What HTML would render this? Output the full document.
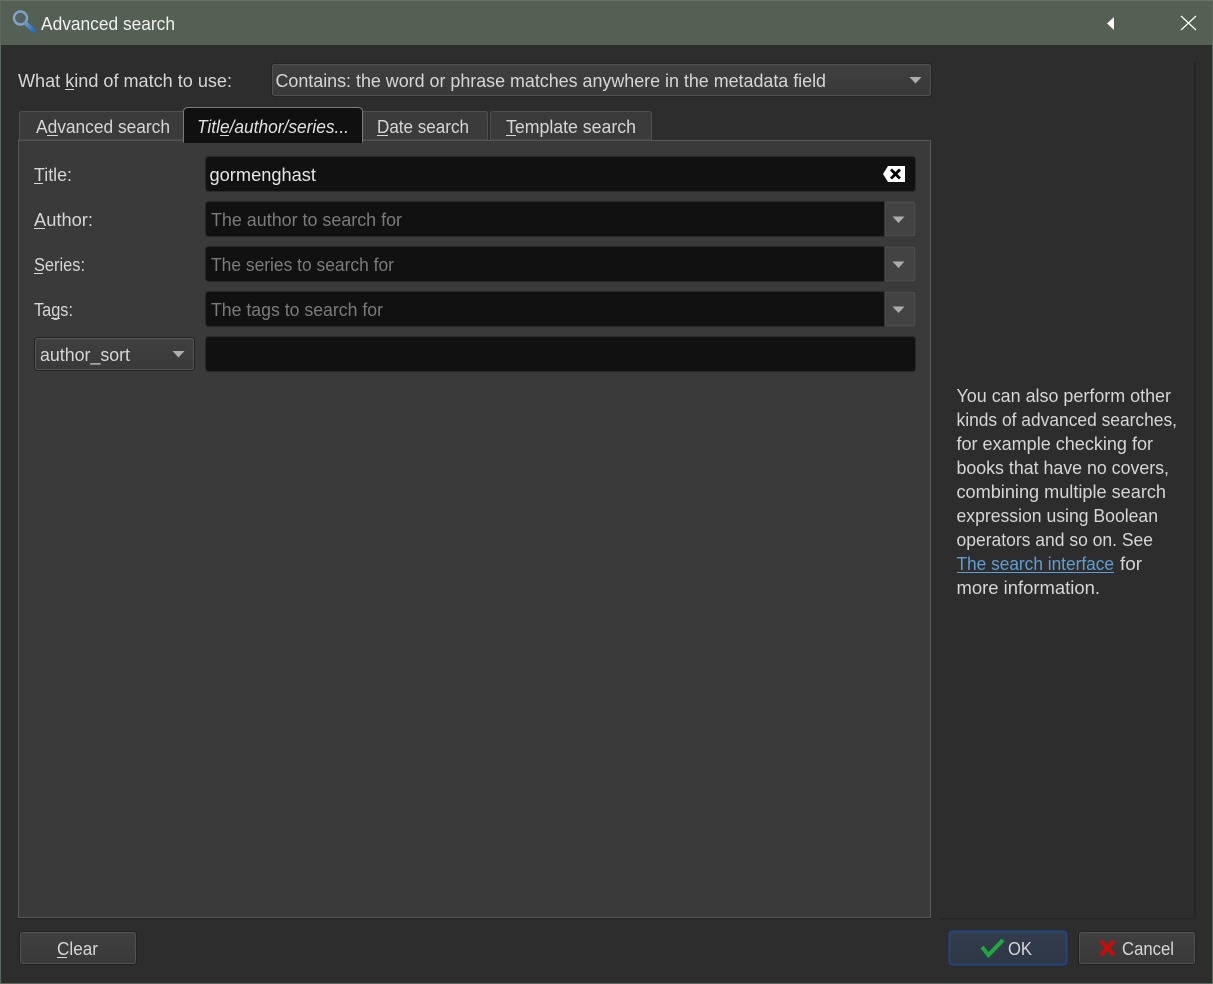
<!DOCTYPE html>
<html><head><meta charset="utf-8"><title>Advanced search</title>
<style>
html,body{margin:0;padding:0;width:1213px;height:984px;overflow:hidden;background:#2d2d2d}
svg{display:block}
text{font-family:"Liberation Sans",sans-serif;font-size:18px;fill:#d6d6d6}
.h{fill:#7b7b7b}
</style></head><body>
<svg width="1213" height="984" viewBox="0 0 1213 984" xmlns="http://www.w3.org/2000/svg">
<defs>
<linearGradient id="btn" x1="0" y1="0" x2="0" y2="1"><stop offset="0" stop-color="#404040"/><stop offset="1" stop-color="#393939"/></linearGradient>
<linearGradient id="ok" x1="0" y1="0" x2="0" y2="1"><stop offset="0" stop-color="#333d4d"/><stop offset="1" stop-color="#2e3746"/></linearGradient>
<linearGradient id="mag" x1="0" y1="0" x2="1" y2="1"><stop offset="0" stop-color="#6d95c0"/><stop offset="1" stop-color="#1f6fd0"/></linearGradient>
</defs>
<rect width="1213" height="984" fill="#2d2d2d"/>
<!-- window frame -->
<rect x="0" y="0" width="1213" height="45" fill="#536053"/>
<rect x="0" y="0" width="1213" height="1" fill="#66736a"/>
<rect x="0" y="0" width="1" height="984" fill="#5d6a5e"/>
<rect x="1212" y="0" width="1" height="984" fill="#5d6a5e"/>
<rect x="0" y="983" width="1213" height="1" fill="#5d6a5e"/>
<!-- title icon -->
<circle cx="20.500" cy="18" r="6.500" fill="#56697a" fill-opacity=".35" stroke="#7fa3c9" stroke-width="2.400"/>
<path d="M26 23.500L33.500 30.500" stroke="url(#mag)" stroke-width="4.200" stroke-linecap="round"/>
<text x="41" y="30" textLength="134" lengthAdjust="spacingAndGlyphs" style="fill:#f1f1f1">Advanced search</text>
<path d="M1114 17V30L1107 23.500Z" fill="#fff"/>
<path d="M1181 16L1196 30M1196 16L1181 30" stroke="#fff" stroke-width="1.200" fill="none"/>
<!-- match row -->
<text x="18" y="87" textLength="214" lengthAdjust="spacingAndGlyphs">What kind of match to use:</text>
<rect x="65" y="89" width="9" height="1" fill="#d6d6d6"/>
<rect x="271.500" y="63.500" width="660" height="33" rx="3" fill="url(#btn)" stroke="#242424"/>
<rect x="272.500" y="64.500" width="658" height="31" rx="2" fill="none" stroke="#505050"/>
<text x="275.500" y="87" textLength="550.500" lengthAdjust="spacingAndGlyphs">Contains: the word or phrase matches anywhere in the metadata field</text>
<path d="M909.500 77H921.500L915.500 83.500Z" fill="#adadad"/>
<!-- side frame -->
<rect x="1194" y="62" width="2" height="857" fill="#262626"/>
<rect x="940" y="918" width="256" height="1.500" fill="#262626"/>
<!-- panel -->
<rect x="18.500" y="140.500" width="912" height="777" fill="#3a3a3a" stroke="#585858"/>
<rect x="18" y="918" width="913" height="1" fill="#232323"/>
<!-- tabs -->
<path d="M19.500 140V114Q19.500 111.500 22 111.500H184V140Z" fill="#3b3b3b" stroke="#505050"/>
<text x="36" y="133" textLength="134" lengthAdjust="spacingAndGlyphs">Advanced search</text>
<rect x="47" y="135" width="11" height="1" fill="#d6d6d6"/>
<path d="M363 111.500H485Q487.500 111.500 487.500 114V140H363Z" fill="#3b3b3b" stroke="#505050"/>
<text x="377" y="133" textLength="92" lengthAdjust="spacingAndGlyphs">Date search</text>
<rect x="377" y="135" width="11" height="1" fill="#d6d6d6"/>
<path d="M490.500 140V114Q490.500 111.500 493 111.500H649Q651.500 111.500 651.500 114V140Z" fill="#3b3b3b" stroke="#505050"/>
<text x="506" y="133" textLength="130" lengthAdjust="spacingAndGlyphs">Template search</text>
<rect x="506" y="135" width="10" height="1" fill="#d6d6d6"/>
<path d="M183.500 142V112Q183.500 107.500 188 107.500H358Q362.500 107.500 362.500 112V142Z" fill="#101010" stroke="#7a7a7a"/>
<rect x="184" y="141" width="178" height="2" fill="#101010"/>
<text x="197" y="133" textLength="152" lengthAdjust="spacingAndGlyphs" font-style="italic" style="fill:#e2e2e2">Title/author/series...</text>
<rect x="220" y="135" width="9" height="1" fill="#d6d6d6"/>
<!-- labels -->
<text x="34" y="181" textLength="38" lengthAdjust="spacingAndGlyphs">Title:</text>
<rect x="34" y="183" width="9" height="1" fill="#d6d6d6"/>
<text x="34" y="226" textLength="59" lengthAdjust="spacingAndGlyphs">Author:</text>
<rect x="34" y="228" width="11" height="1" fill="#d6d6d6"/>
<text x="34" y="271" textLength="51" lengthAdjust="spacingAndGlyphs">Series:</text>
<rect x="34" y="273" width="9" height="1" fill="#d6d6d6"/>
<text x="34" y="316" textLength="39" lengthAdjust="spacingAndGlyphs">Tags:</text>
<rect x="51" y="318" width="9" height="1" fill="#d6d6d6"/>
<!-- title input -->
<rect x="205.500" y="156.500" width="710" height="35" rx="3" fill="#111" stroke="#2a2a2a"/>
<text x="209.500" y="181" textLength="106.500" lengthAdjust="spacingAndGlyphs" style="fill:#e6e6e6">gormenghast</text>
<path d="M883 174L888 166H905V182H888Z" fill="#fff"/>
<path d="M891 169.500L900 178.500M900 169.500L891 178.500" stroke="#000" stroke-width="2.800"/>
<!-- author -->
<rect x="205.500" y="201.500" width="710" height="35" rx="3" fill="#111" stroke="#2a2a2a"/>
<path d="M885 202H912.500Q915 202 915 204.500V233.500Q915 236 912.500 236H885Z" fill="#434343" stroke="#555"/>
<path d="M892.500 216.500H904.500L898.500 223Z" fill="#adadad"/>
<text class="h" x="211" y="226" textLength="191" lengthAdjust="spacingAndGlyphs">The author to search for</text>
<!-- series -->
<rect x="205.500" y="246.500" width="710" height="35" rx="3" fill="#111" stroke="#2a2a2a"/>
<path d="M885 247H912.500Q915 247 915 249.500V278.500Q915 281 912.500 281H885Z" fill="#434343" stroke="#555"/>
<path d="M892.500 261.500H904.500L898.500 268Z" fill="#adadad"/>
<text class="h" x="211" y="271" textLength="183" lengthAdjust="spacingAndGlyphs">The series to search for</text>
<!-- tags -->
<rect x="205.500" y="291.500" width="710" height="35" rx="3" fill="#111" stroke="#2a2a2a"/>
<path d="M885 292H912.500Q915 292 915 294.500V323.500Q915 326 912.500 326H885Z" fill="#434343" stroke="#555"/>
<path d="M892.500 306.500H904.500L898.500 313Z" fill="#adadad"/>
<text class="h" x="211" y="316" textLength="172" lengthAdjust="spacingAndGlyphs">The tags to search for</text>
<!-- author_sort -->
<rect x="34.500" y="337.500" width="160" height="33" rx="3" fill="url(#btn)" stroke="#222"/>
<rect x="35.500" y="338.500" width="158" height="31" rx="2" fill="none" stroke="#575757"/>
<text x="40" y="361" textLength="90" lengthAdjust="spacingAndGlyphs">author_sort</text>
<path d="M172.500 351H184.500L178.500 357.500Z" fill="#adadad"/>
<rect x="205.500" y="336.500" width="710" height="35" rx="3" fill="#111" stroke="#2a2a2a"/>
<!-- help text -->
<text x="956.500" y="402" textLength="214.500" lengthAdjust="spacingAndGlyphs">You can also perform other</text>
<text x="956.500" y="426" textLength="220.500" lengthAdjust="spacingAndGlyphs">kinds of advanced searches,</text>
<text x="956.500" y="450" textLength="196.500" lengthAdjust="spacingAndGlyphs">for example checking for</text>
<text x="956.500" y="474" textLength="212.500" lengthAdjust="spacingAndGlyphs">books that have no covers,</text>
<text x="956.500" y="498" textLength="209.500" lengthAdjust="spacingAndGlyphs">combining multiple search</text>
<text x="956.500" y="522" textLength="201.500" lengthAdjust="spacingAndGlyphs">expression using Boolean</text>
<text x="956.500" y="546" textLength="196.500" lengthAdjust="spacingAndGlyphs">operators and so on. See</text>
<text x="956.500" y="570" textLength="157.500" lengthAdjust="spacingAndGlyphs" style="fill:#5f9fd6">The search interface</text>
<rect x="957" y="572" width="157" height="1" fill="#5f9fd6"/>
<text x="1120" y="570" textLength="22" lengthAdjust="spacingAndGlyphs">for</text>
<text x="956.500" y="594" textLength="143.500" lengthAdjust="spacingAndGlyphs">more information.</text>
<!-- buttons -->
<rect x="19.500" y="931.500" width="117" height="33" rx="3" fill="url(#btn)" stroke="#222"/>
<rect x="20.500" y="932.500" width="115" height="31" rx="2" fill="none" stroke="#525252"/>
<text x="57" y="955" textLength="41" lengthAdjust="spacingAndGlyphs">Clear</text>
<rect x="57" y="957" width="10" height="1" fill="#d6d6d6"/>
<rect x="949.500" y="931.500" width="117" height="33" rx="3" fill="url(#ok)" stroke="#26457f" stroke-width="2"/>
<path d="M982 947L988.500 955L1003 940" fill="none" stroke="#1fa83c" stroke-width="4"/>
<text x="1008" y="955" textLength="24" lengthAdjust="spacingAndGlyphs">OK</text>
<rect x="1078.500" y="931.500" width="117" height="33" rx="3" fill="url(#btn)" stroke="#222"/>
<rect x="1079.500" y="932.500" width="115" height="31" rx="2" fill="none" stroke="#525252"/>
<path d="M1101 941L1114 955M1114 941L1101 955" stroke="#c3100f" stroke-width="4.200"/>
<text x="1122" y="955" textLength="52" lengthAdjust="spacingAndGlyphs">Cancel</text>
</svg>
</body></html>
